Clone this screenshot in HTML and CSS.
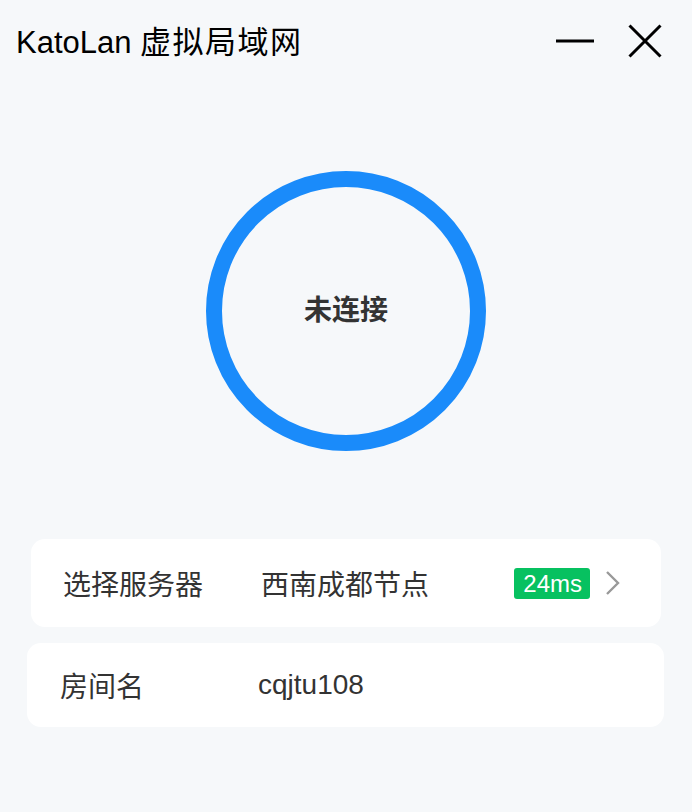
FILE: index.html
```html
<!DOCTYPE html>
<html lang="zh-CN">
<head>
<meta charset="utf-8">
<title>KatoLan 虚拟局域网</title>
<link rel="stylesheet" href="styles.css">
</head>
<body>
<div class="app">
  <header class="titlebar">
    <div class="title">KatoLan <span class="title-cn">虚拟局域网</span></div>
    <div class="win-controls">
      <svg class="icon-min" width="40" height="32" viewBox="0 0 40 32"><line x1="1" y1="16" x2="39" y2="16" stroke="#000" stroke-width="3"/></svg>
      <svg class="icon-close" width="34" height="34" viewBox="0 0 34 34"><path d="M1.5 1.5 L32.5 32.5 M32.5 1.5 L1.5 32.5" stroke="#000" stroke-width="3" fill="none"/></svg>
    </div>
  </header>
  <section class="status">
    <div class="ring"><span class="ring-text">未连接</span></div>
  </section>
  <section class="cards">
    <div class="card card-server">
      <span class="label">选择服务器</span>
      <span class="value">西南成都节点</span>
      <span class="badge">24ms</span>
      <svg class="chevron" width="16" height="26" viewBox="0 0 16 26"><path d="M3 2 L14 13 L3 24" stroke="#999" stroke-width="2.4" fill="none"/></svg>
    </div>
    <div class="card card-room">
      <span class="label">房间名</span>
      <span class="value">cqjtu108</span>
    </div>
  </section>
</div>
</body>
</html>
```
FILE: styles.css
```css
html, body {
  margin: 0;
  padding: 0;
}
body {
  background: #f6f8fa;
  font-family: "Liberation Sans", Arial, "Noto Sans CJK SC", sans-serif;
  color: #333;
  width: 692px;
  height: 812px;
  overflow: hidden;
}
.app {
  display: flex;
  flex-direction: column;
}
.titlebar {
  height: 82px;
  display: flex;
  align-items: center;
  justify-content: space-between;
  padding: 0 30px 0 16px;
}
.title {
  font-size: 31px;
  color: #000;
  line-height: 1;
  padding-top: 2px;
}
.title-cn {
  letter-spacing: 1.5px;
}
.win-controls {
  display: flex;
  align-items: center;
  gap: 33px;
}
.icon-min, .icon-close {
  display: block;
}
.status {
  display: flex;
  justify-content: center;
  padding-top: 89px;
  padding-bottom: 88px;
}
.ring {
  width: 248px;
  height: 248px;
  border: 16px solid #1a8bfa;
  border-radius: 50%;
  display: flex;
  align-items: center;
  justify-content: center;
}
.ring-text {
  font-size: 28px;
  font-weight: bold;
  color: #333;
  line-height: 1;
}
.cards {
  display: flex;
  flex-direction: column;
  gap: 16px;
}
.card {
  background: #fff;
  border-radius: 14px;
  display: flex;
  align-items: center;
  font-size: 28px;
  color: #333;
}
.card-server {
  height: 88px;
  margin: 0 31px;
  padding: 0 41px 0 32px;
}
.card-room {
  height: 84px;
  margin: 0 28px 0 27px;
  padding: 0 32px 0 33px;
}
.label {
  width: 198px;
  flex: none;
}
.value {
  flex: 1;
}
.badge {
  background: #07c160;
  color: #fff;
  font-size: 24px;
  line-height: 31px;
  height: 31px;
  padding: 0 8px 0 9px;
  border-radius: 3px;
}
.chevron {
  display: block;
  margin-left: 14px;
}
```
